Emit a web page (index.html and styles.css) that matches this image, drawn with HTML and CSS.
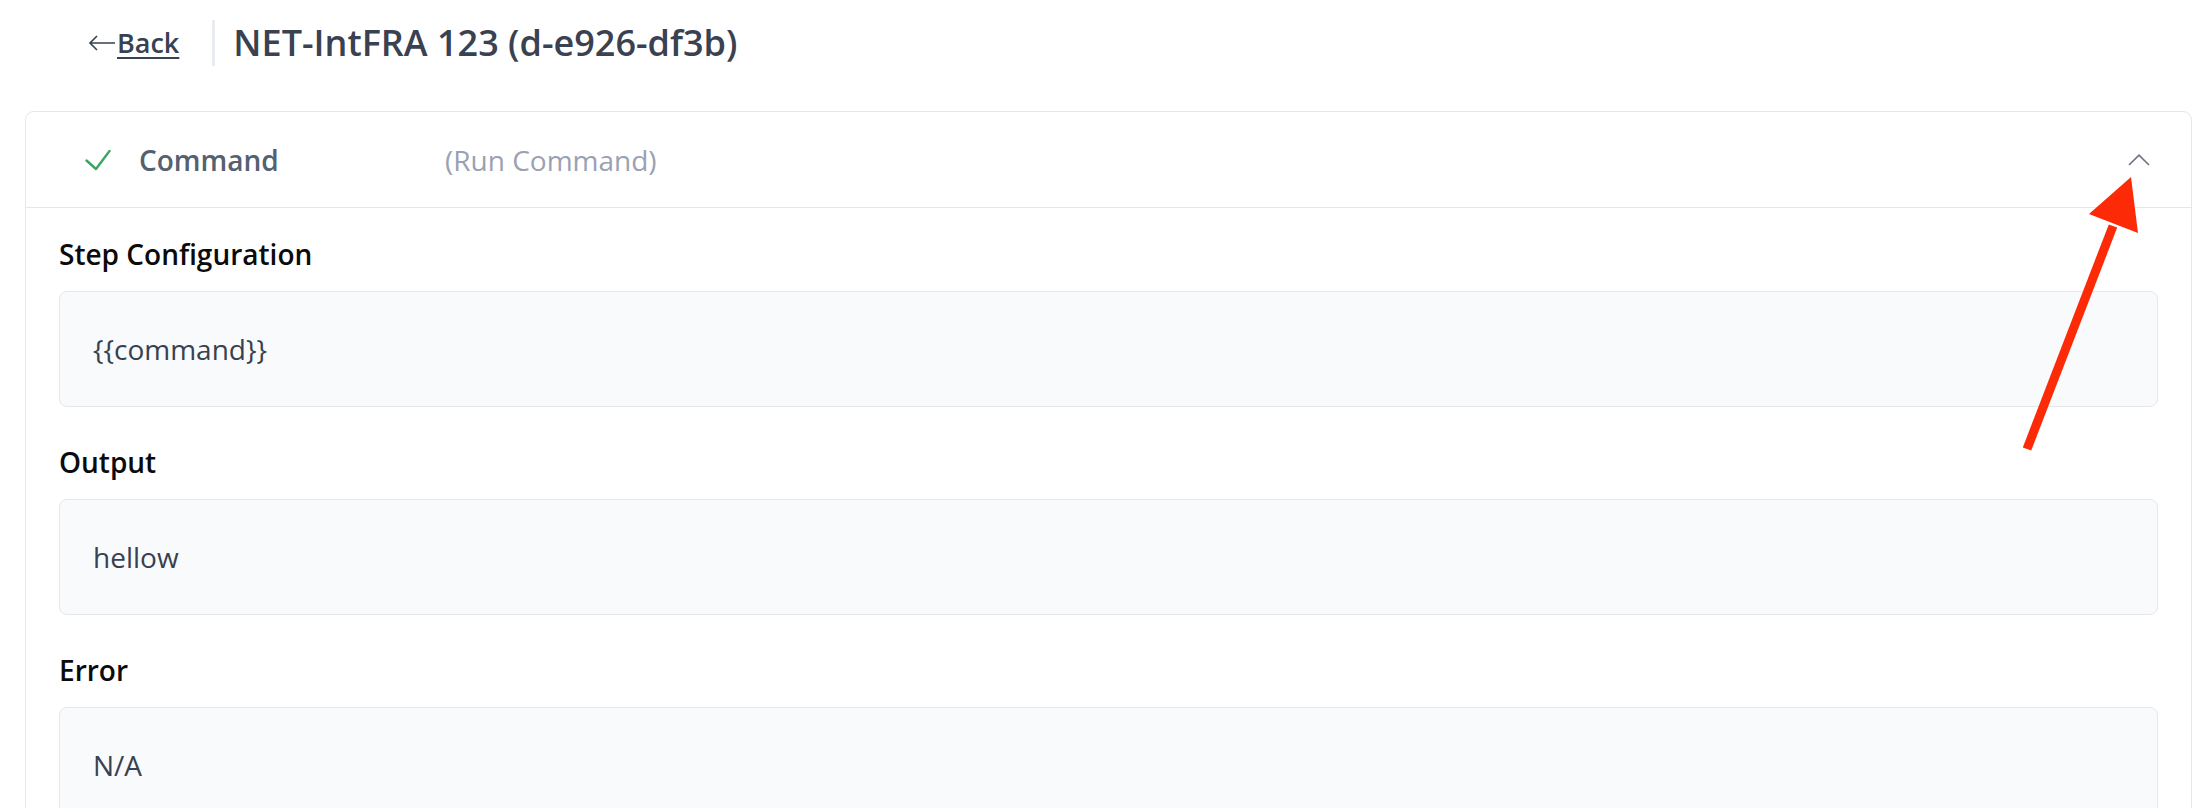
FILE: index.html
```html
<!DOCTYPE html>
<html lang="en">
<head>
<meta charset="utf-8">
<title>NET-IntFRA 123 (d-e926-df3b)</title>
<link rel="stylesheet" href="styles.css">
</head>
<body>
<div class="page">
  <header class="topbar">
    <a class="back" href="#">
      <svg class="back-arrow" width="28" height="16" viewBox="0 0 28 16" aria-hidden="true">
        <path d="M27 8H2M9 1L2 8l7 7" fill="none" stroke="#374151" stroke-width="1.6" stroke-linejoin="miter"/>
      </svg><span class="back-text">Back</span>
    </a>
    <span class="divider"></span>
    <h1 class="title">NET-IntFRA 123 (d-e926-df3b)</h1>
  </header>

  <section class="card">
    <div class="card-head">
      <svg class="check" width="26" height="22" viewBox="0 0 26 22" aria-hidden="true">
        <path d="M1.5 11.5L11 20L24.5 2" fill="none" stroke="#3da562" stroke-width="2.4" stroke-linecap="round" stroke-linejoin="round"/>
      </svg>
      <span class="step-name">Command</span>
      <span class="step-type">(Run Command)</span>
      <svg class="chevron" width="22" height="12" viewBox="0 0 22 12" aria-hidden="true">
        <path d="M1 11L11 1.2L21 11" fill="none" stroke="#6b7280" stroke-width="1.6"/>
      </svg>
    </div>
    <div class="card-body">
      <div class="field">
        <div class="field-label">Step Configuration</div>
        <div class="field-box">{{command}}</div>
      </div>
      <div class="field">
        <div class="field-label">Output</div>
        <div class="field-box">hellow</div>
      </div>
      <div class="field">
        <div class="field-label">Error</div>
        <div class="field-box">N/A</div>
      </div>
    </div>
  </section>

  <svg class="annotation" width="2206" height="808" viewBox="0 0 2206 808" aria-hidden="true">
    <line x1="2027" y1="449" x2="2113" y2="226" stroke="#fc2a06" stroke-width="9"/>
    <polygon points="2131,177 2089,214 2138,233" fill="#fc2a06"/>
  </svg>
</div>
</body>
</html>
```

FILE: styles.css
```css
* { box-sizing: border-box; }

html, body {
  margin: 0;
  padding: 0;
  background: #ffffff;
}

body {
  font-family: "Open Sans", "Noto Sans", "DejaVu Sans", sans-serif;
  color: #374151;
  overflow: hidden;
  height: 808px;
}

.page {
  position: relative;
  padding: 0 14px 0 25px;
}

.topbar {
  display: flex;
  align-items: center;
  height: 86px;
  padding-left: 63px;
  margin-bottom: 25px;
}

.back {
  display: flex;
  align-items: center;
  color: #374151;
  text-decoration: none;
  font-size: 27px;
  font-weight: 600;
  line-height: 36px;
}

.back-arrow {
  display: block;
  margin-right: 1px;
}

.back-text {
  text-decoration: underline;
  text-decoration-thickness: 2px;
  text-underline-offset: 4px;
}

.divider {
  width: 3px;
  height: 46px;
  background: #e8ebf0;
  margin-left: 33px;
}

.title {
  margin: 0 0 0 18px;
  font-size: 36px;
  font-weight: 600;
  line-height: 48px;
  color: #3a4150;
}

.card {
  border: 1px solid #e5e7eb;
  border-radius: 9px;
  background: #ffffff;
  min-height: 760px;
}

.card-head {
  display: flex;
  align-items: center;
  height: 96px;
  border-bottom: 1px solid #e5e7eb;
  padding: 0 41px 0 59px;
}

.check {
  display: block;
  flex: none;
}

.step-name {
  margin-left: 28px;
  min-width: 306px;
  font-size: 28px;
  font-weight: 600;
  color: #556070;
  line-height: 40px;
}

.step-type {
  font-size: 28px;
  font-weight: 400;
  color: #9aa1b2;
  line-height: 40px;
}

.chevron {
  display: block;
  margin-left: auto;
}

.card-body {
  display: flex;
  flex-direction: column;
  gap: 35px;
  padding: 26px 33px 0 33px;
}

.field-label {
  font-size: 28px;
  font-weight: 600;
  line-height: 40px;
  color: #0b0b0c;
  margin-bottom: 17px;
}

.field-box {
  background: #f9fafb;
  border: 1px solid #e5e7eb;
  border-radius: 8px;
  padding: 37px 33px;
  font-size: 28px;
  line-height: 40px;
  color: #374151;
}

.annotation {
  position: absolute;
  top: 0;
  left: 0;
  pointer-events: none;
}
```
